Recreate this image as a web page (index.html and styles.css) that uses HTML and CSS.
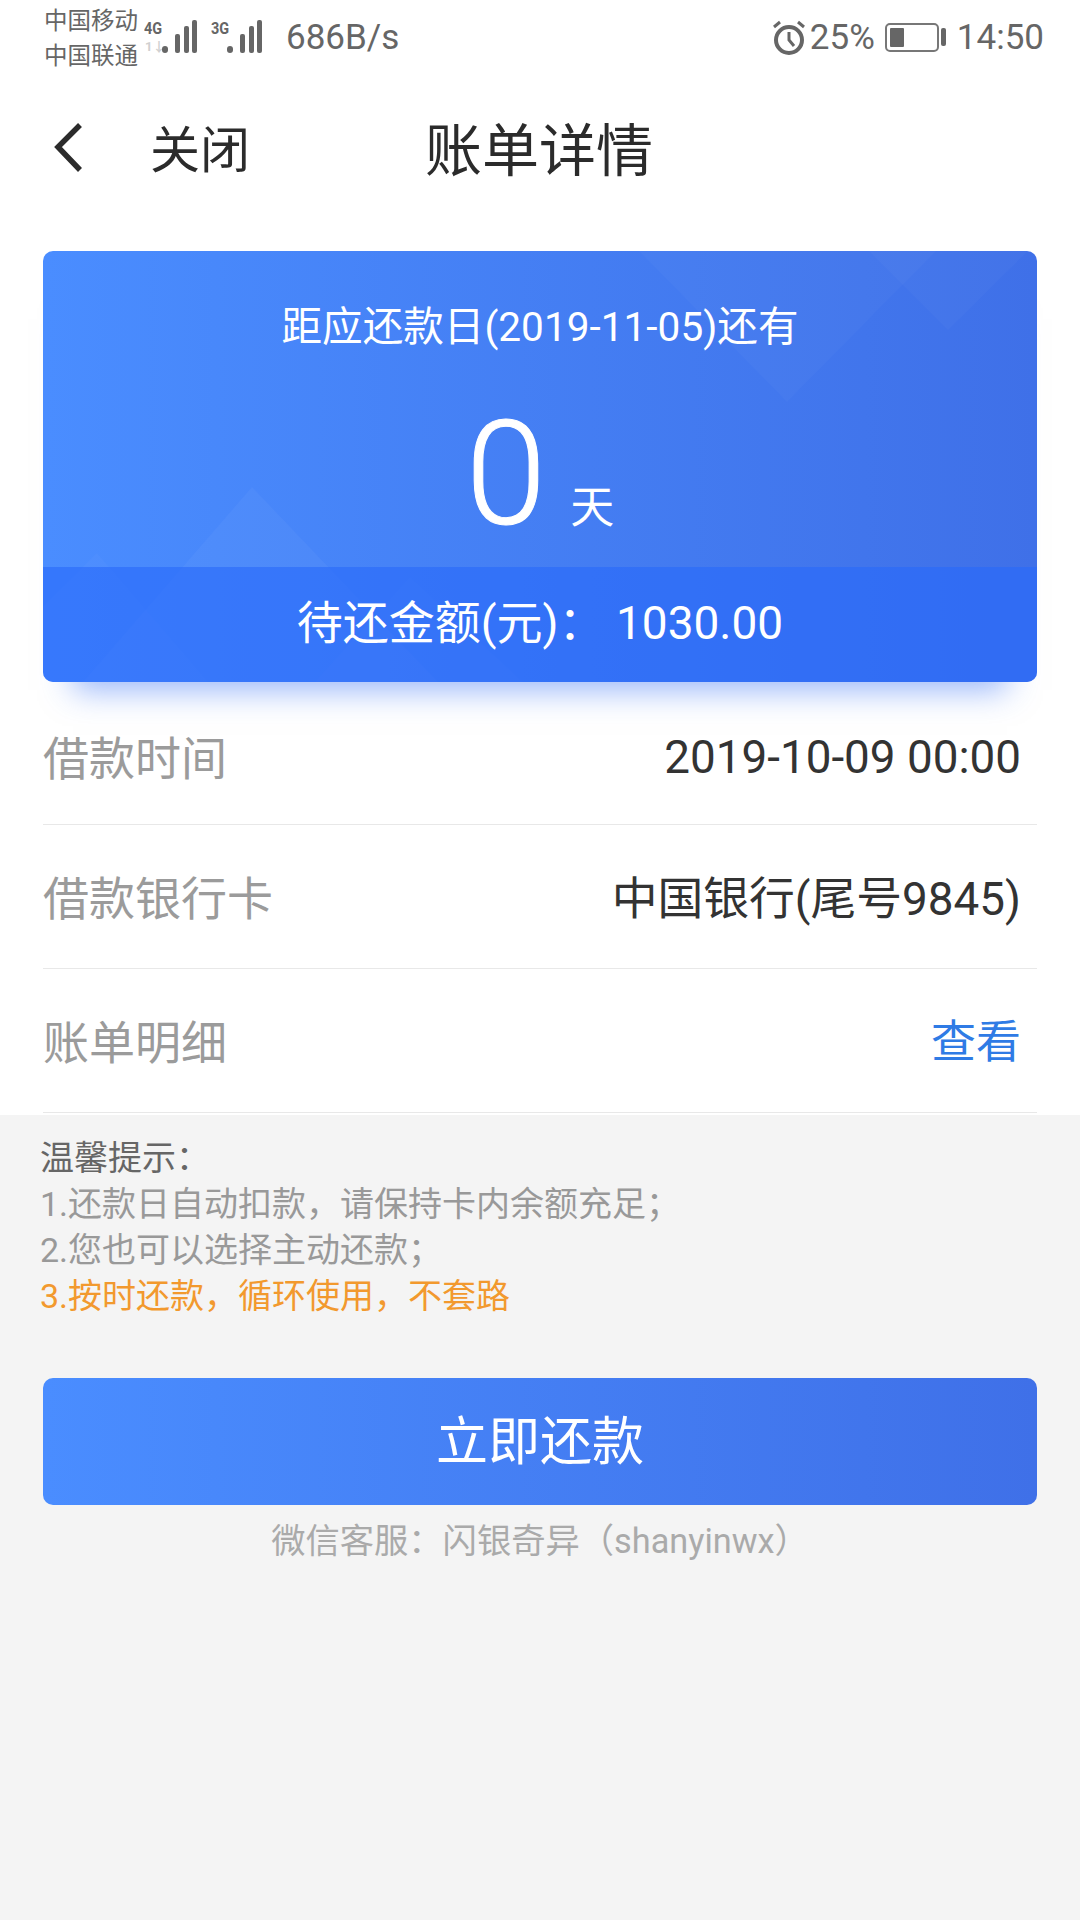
FILE: index.html
```html
<!DOCTYPE html>
<html>
<head>
    <meta charset="utf-8">
    <link rel="stylesheet" href="styles.css">
</head>
<body>
    <div class="top">
        <div class="status-bar">
            <div class="carriers">
                <span>中国移动</span>
                <span>中国联通</span>
            </div>
            <div class="signal">
                <span class="net">4G</span>
                <span class="net-sub">1↓</span>
                <svg width="35" height="33" viewBox="0 0 35 33" class="bars">
                    <rect x="0" y="26" width="6" height="7" rx="3"/>
                    <rect x="13" y="14" width="5" height="19" rx="2"/>
                    <rect x="22" y="6" width="5" height="27" rx="2"/>
                    <rect x="30" y="0" width="5" height="33" rx="2"/>
                </svg>
            </div>
            <div class="signal signal-second">
                <span class="net">3G</span>
                <svg width="35" height="33" viewBox="0 0 35 33" class="bars">
                    <rect x="0" y="26" width="6" height="7" rx="3"/>
                    <rect x="13" y="14" width="5" height="19" rx="2"/>
                    <rect x="22" y="6" width="5" height="27" rx="2"/>
                    <rect x="30" y="0" width="5" height="33" rx="2"/>
                </svg>
            </div>
            <span class="speed">686B/s</span>
            <div class="status-right">
                <svg width="34" height="36" viewBox="0 0 34 36" fill="none" stroke="#666" class="alarm">
                    <circle cx="17" cy="21" r="13" stroke-width="4"/>
                    <path d="M17 13v8l5 6" stroke-width="3"/>
                    <path d="M2 8l6-5M32 8l-6-5" stroke-width="3"/>
                </svg>
                <span class="pct">25%</span>
                <div class="battery"><div class="battery-level"></div></div>
                <div class="battery-tip"></div>
                <span class="clock">14:50</span>
            </div>
        </div>
        <div class="nav-bar">
            <svg width="34" height="54" viewBox="0 0 34 54" fill="none" stroke="#2b2b2b" stroke-width="5.5" class="back">
                <path d="M28 4L6 26l22 23"/>
            </svg>
            <span class="close">关闭</span>
            <h1 class="title">账单详情</h1>
        </div>
        <div class="bill-card">
            <svg class="card-bg" width="994" height="431" viewBox="0 0 994 431">
                <path d="M596 0L744 151 893 0z" fill="#fff" opacity=".025"/>
                <path d="M826 0L905 79 985 0z" fill="#fff" opacity=".025"/>
                <path d="M209 236L395 431H40z" fill="#fff" opacity=".035"/>
                <path d="M54 302L0 356V431H165z" fill="#fff" opacity=".025"/>
                <path d="M367 326L272 431H480z" fill="#fff" opacity=".025"/>
            </svg>
            <div class="card-main">
                <div class="due-text">距应还款日(2019-11-05)还有</div>
                <div class="days"><span class="days-num">0</span><span class="days-unit">天</span></div>
            </div>
            <div class="card-amount">待还金额(元)：&nbsp;1030.00</div>
        </div>
        <div class="rows">
            <div class="row">
                <span class="row-label">借款时间</span>
                <span class="row-value">2019-10-09 00:00</span>
            </div>
            <div class="row">
                <span class="row-label">借款银行卡</span>
                <span class="row-value">中国银行(尾号9845)</span>
            </div>
            <div class="row">
                <span class="row-label">账单明细</span>
                <span class="row-link">查看</span>
            </div>
        </div>
    </div>
    <div class="bottom">
        <div class="tips">
            <div class="tips-title">温馨提示：</div>
            <div>1.还款日自动扣款，请保持卡内余额充足；</div>
            <div>2.您也可以选择主动还款；</div>
            <div class="tips-hl">3.按时还款，循环使用，不套路</div>
        </div>
        <button class="pay-btn">立即还款</button>
        <div class="service">微信客服：闪银奇异（shanyinwx）</div>
    </div>
</body>
</html>
```

FILE: styles.css
```css
* {
    box-sizing: border-box;
}

body {
    margin: 0;
    width: 1080px;
    height: 1920px;
    overflow: hidden;
    font-family: Roboto, "Noto Sans CJK SC", sans-serif;
    background: #f4f4f4;
    color: #333;
}

.top {
    height: 1115px;
    background: #fff;
}

.status-bar {
    height: 72px;
    padding: 4px 36px 0 44px;
    display: flex;
    align-items: flex-start;
    color: #666;
}

.carriers {
    display: flex;
    flex-direction: column;
    font-size: 23.5px;
    line-height: 35px;
    width: 99px;
}

.signal {
    position: relative;
    width: 54px;
    height: 50px;
}

.signal-second {
    margin-left: 13px;
}

.net {
    position: absolute;
    left: 1px;
    top: 15px;
    font-size: 17px;
    line-height: 18px;
    font-weight: 700;
    transform: scaleX(.85);
    transform-origin: left;
}

.net-sub {
    position: absolute;
    left: 2px;
    top: 36px;
    font-size: 13px;
    line-height: 14px;
    color: #d0d0d0;
    font-weight: 700;
}

.bars {
    position: absolute;
    right: 0;
    top: 16px;
    fill: #666;
}

.signal-second .bars {
    right: 2px;
}

.speed {
    font-size: 35px;
    line-height: 40px;
    margin: 14px 0 0 22px;
}

.status-right {
    margin-left: auto;
    display: flex;
    align-items: center;
    height: 40px;
    margin-top: 13px;
}

.pct {
    font-size: 35px;
    margin-left: 4px;
}

.battery {
    width: 54px;
    height: 29px;
    border: 2px solid #777;
    border-radius: 5px;
    padding: 3px;
    margin-left: 10px;
}

.battery-level {
    width: 14px;
    height: 100%;
    background: #666;
    border-radius: 1px;
}

.battery-tip {
    width: 5px;
    height: 18px;
    background: #666;
    border-radius: 2px;
    margin-left: 2px;
}

.clock {
    font-size: 35px;
    margin-left: 11px;
}

.nav-bar {
    height: 152px;
    display: flex;
    align-items: center;
    padding-left: 52px;
    color: #2b2b2b;
}

.close {
    font-size: 50px;
    margin: 0 0 5px 64px;
}

.title {
    margin: 0 0 5px 175px;
    font-size: 57px;
    font-weight: 400;
}

.bill-card {
    position: relative;
    margin: 27px 43px 0;
    height: 431px;
    border-radius: 10px;
    background: linear-gradient(90deg, #4a8dff, #3f70e8);
    color: #fff;
    box-shadow: 0 38px 30px -30px rgba(50, 110, 245, .5);
}

.card-bg {
    position: absolute;
    left: 0;
    top: 0;
    border-radius: 10px;
}

.card-main {
    position: relative;
    height: 316px;
    text-align: center;
}

.due-text {
    padding-top: 49px;
    font-size: 40.6px;
    line-height: 54px;
}

.days {
    margin-top: 38px;
    display: flex;
    justify-content: center;
    align-items: flex-end;
}

.days-num {
    font-size: 145px;
    line-height: 164px;
    font-weight: 300;
    -webkit-text-stroke: 1px #fff;
}

.days-unit {
    font-size: 44px;
    line-height: 60px;
    margin: 0 0 18px 24px;
}

.card-amount {
    position: relative;
    height: 115px;
    background: rgba(40, 105, 250, .6);
    font-size: 46px;
    line-height: 112px;
    text-align: center;
    border-radius: 0 0 10px 10px;
}

.rows {
    margin: 0 43px;
}

.row {
    height: 144px;
    border-bottom: 1px solid #e8e8e8;
    display: flex;
    justify-content: space-between;
    align-items: center;
    padding: 0 16px 4px 0;
}

.row:first-child {
    height: 143px;
    padding-top: 12px;
}

.row:first-child .row-label {
    margin-bottom: 5px;
}

.row-label {
    font-size: 46px;
    color: #9b9b9b;
}

.row-value {
    font-size: 45.8px;
    color: #333;
}

.row-link {
    font-size: 45px;
    color: #2f7be5;
}

.bottom {
    padding: 0 43px;
}

.tips {
    padding-top: 20px;
    margin-left: -3px;
    font-size: 34px;
    line-height: 46px;
    color: #999;
}

.tips-title {
    color: #666;
}

.tips-hl {
    color: #f2992e;
}

.pay-btn {
    display: block;
    width: 100%;
    height: 127px;
    margin-top: 59px;
    padding: 0 0 9px;
    border: 0;
    border-radius: 10px;
    background: linear-gradient(90deg, #4a8dff, #3f70e8);
    color: #fff;
    font-family: inherit;
    font-size: 52px;
}

.service {
    margin-top: 13px;
    font-size: 34.3px;
    line-height: 46px;
    text-align: center;
    color: #aaa;
}
```
